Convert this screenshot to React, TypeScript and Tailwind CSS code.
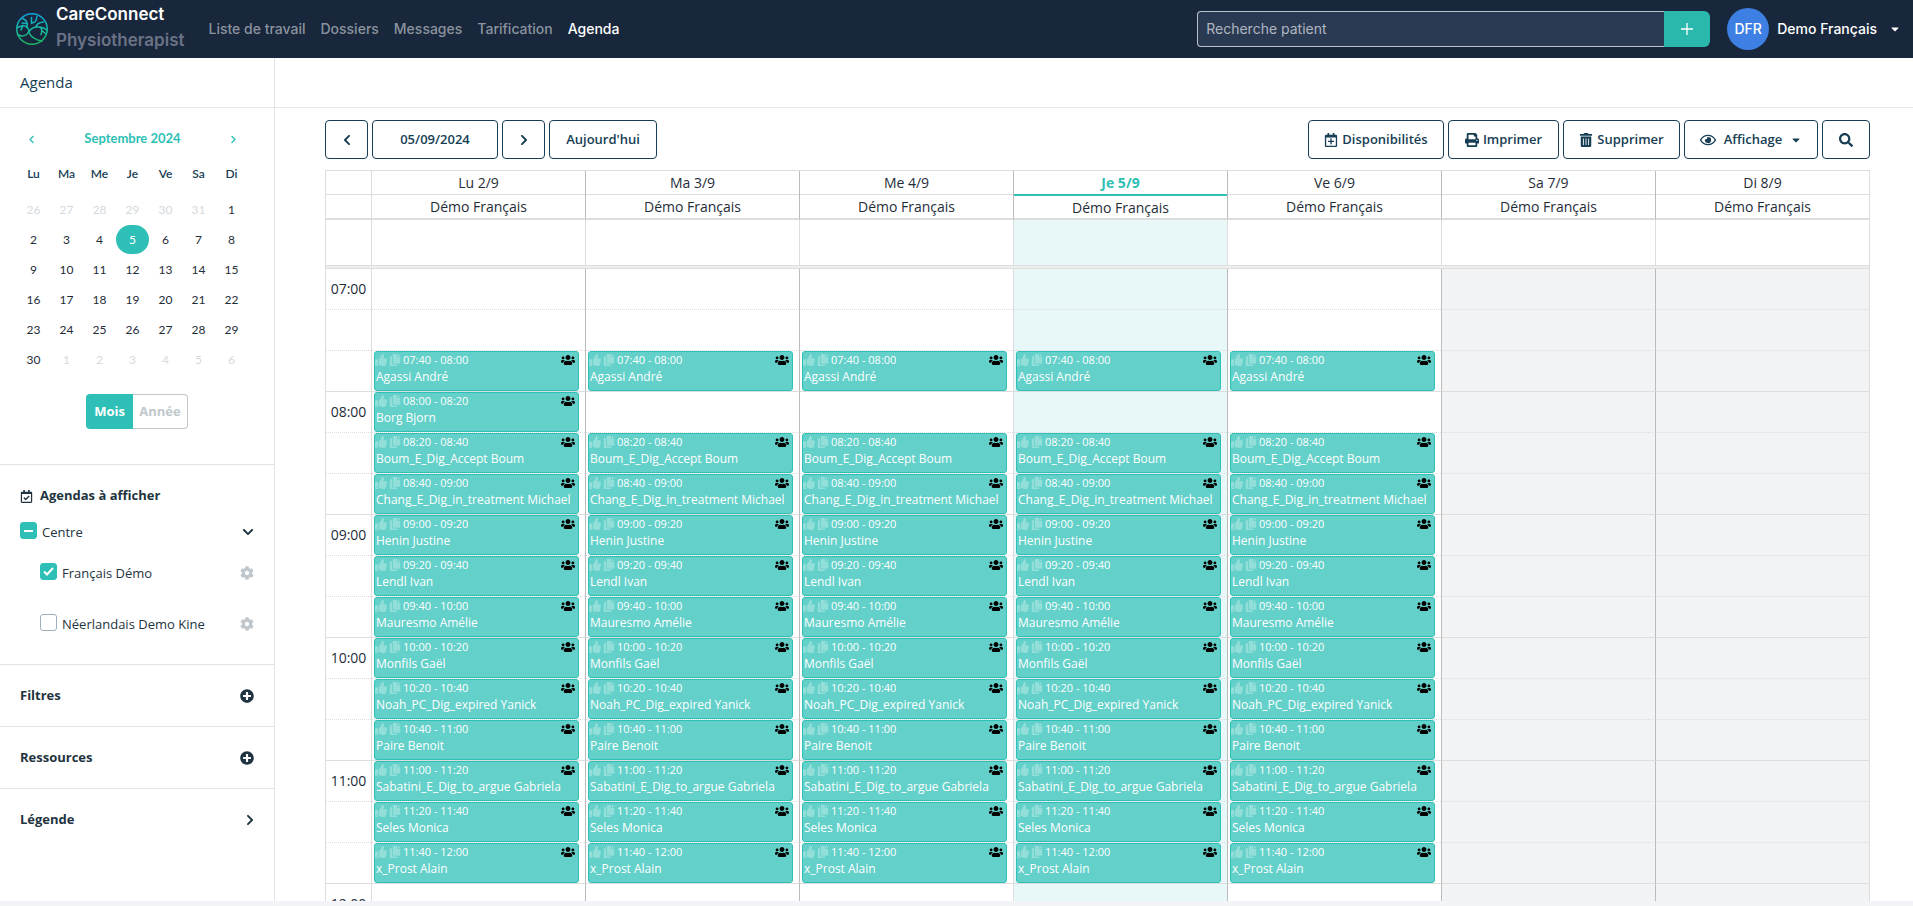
import { useState } from 'react';
import {
  FaCaretDown,
  FaChevronDown,
  FaChevronLeft,
  FaChevronRight,
  FaCog,
  FaCopy,
  FaPlusCircle,
  FaPrint,
  FaRegCalendarCheck,
  FaRegCalendarPlus,
  FaRegEye,
  FaSearch,
  FaThumbsUp,
  FaTrashAlt,
  FaUsers,
} from 'react-icons/fa';

interface Appointment {
  start: string;
  end: string;
  patient: string;
  days: number[];
}

const NAV = ['Liste de travail', 'Dossiers', 'Messages', 'Tarification', 'Agenda'];
const WEEKDAYS = ['Lu', 'Ma', 'Me', 'Je', 'Ve', 'Sa', 'Di'];
const TODAY = 3; // column index of the current day
const WORKDAYS = [0, 1, 2, 3, 4];

const APPOINTMENTS: Appointment[] = [
  { start: '07:40', end: '08:00', patient: 'Agassi André', days: WORKDAYS },
  { start: '08:00', end: '08:20', patient: 'Borg Bjorn', days: [0] },
  { start: '08:20', end: '08:40', patient: 'Boum_E_Dig_Accept Boum', days: WORKDAYS },
  { start: '08:40', end: '09:00', patient: 'Chang_E_Dig_in_treatment Michael', days: WORKDAYS },
  { start: '09:00', end: '09:20', patient: 'Henin Justine', days: WORKDAYS },
  { start: '09:20', end: '09:40', patient: 'Lendl Ivan', days: WORKDAYS },
  { start: '09:40', end: '10:00', patient: 'Mauresmo Amélie', days: WORKDAYS },
  { start: '10:00', end: '10:20', patient: 'Monfils Gaël', days: WORKDAYS },
  { start: '10:20', end: '10:40', patient: 'Noah_PC_Dig_expired Yanick', days: WORKDAYS },
  { start: '10:40', end: '11:00', patient: 'Paire Benoit', days: WORKDAYS },
  { start: '11:00', end: '11:20', patient: 'Sabatini_E_Dig_to_argue Gabriela', days: WORKDAYS },
  { start: '11:20', end: '11:40', patient: 'Seles Monica', days: WORKDAYS },
  { start: '11:40', end: '12:00', patient: 'x_Prost Alain', days: WORKDAYS },
];

// 20 minute slots from 07:00
const SLOTS = Array.from({ length: 18 }, (_, i) => {
  const h = 7 + Math.floor(i / 3);
  const m = (i % 3) * 20;
  return `${String(h).padStart(2, '0')}:${String(m).padStart(2, '0')}`;
});

// September 2024 with the overflow of the neighbouring months
const MONTH_DAYS = Array.from({ length: 42 }, (_, i) => {
  if (i < 6) return { day: 26 + i, other: true };
  if (i < 36) return { day: i - 5, other: false };
  return { day: i - 35, other: true };
});

const toolBtn =
  'flex h-[39px] items-center justify-center rounded-sm border border-[#173e54] bg-white text-[13px] font-semibold text-[#173e54] hover:bg-gray-50';

function Logo() {
  return (
    <svg className="size-8 shrink-0" viewBox="0 0 32 32" fill="none" stroke="url(#brand)" strokeWidth="1.5" strokeLinecap="round" strokeLinejoin="round">
      <defs>
        <linearGradient id="brand" x1="0" y1="0" x2="0" y2="32" gradientUnits="userSpaceOnUse">
          <stop offset="0" stopColor="#12a5e0" />
          <stop offset="0.5" stopColor="#16b8a5" />
          <stop offset="1" stopColor="#1fb35a" />
        </linearGradient>
      </defs>
      <circle cx="16" cy="16" r="15.2" />
      <path d="M1.5 21.5c5 3 9.500 1 11.500-3 2.500-4 6-5 10-4.500 4 .5 6.500 1.500 8 3.500" />
      <path d="M12.800 19c1.500 4 4 7.500 13.200 9" />
      <path d="M13 18.500c-.5-3.500-2-5.500-6-6l-5.500 2M7 12.500 5 17" />
      <path d="M11 14c1-3.500.5-6.500-4.500-8.500M10.500 10.500 6 10" />
      <path d="M15.500 10.500V4.500M15.500 10c3.500 0 5-2.500 5.500-6.500" />
      <path d="M20 14c.5-3 3-4.500 7.500-5" />
      <path d="M24.500 14.500c2 2 1.500 4.500.5 7M26.500 18l3 2.500" />
    </svg>
  );
}

function TopBar() {
  return (
    <header className="flex h-[58px] shrink-0 items-center bg-[#18273c] pl-4 pr-3 font-['Inter',sans-serif]">
      <a href="#" className="flex items-center gap-2">
        <Logo />
        <span className="flex flex-col pb-1 text-[17px] font-semibold leading-[26px]">
          <span className="text-white">CareConnect</span>
          <span className="text-[#6b7285]">Physiotherapist</span>
        </span>
      </a>
      <nav className="ml-6 flex gap-[15px] text-sm font-medium">
        {NAV.map((item) => (
          <a key={item} href="#" className={item === 'Agenda' ? 'text-white' : 'text-[#8b939e] hover:text-white'}>
            {item}
          </a>
        ))}
      </nav>
      <form className="ml-auto flex h-9" onSubmit={(e) => e.preventDefault()}>
        <input
          type="text"
          aria-label="Recherche patient"
          placeholder="Recherche patient"
          className="w-[467px] rounded-l-sm border border-r-0 border-[#b9c1cd] bg-[#2a3a52] px-2 text-sm text-white placeholder:text-[#b0b6c1] focus:outline-none"
        />
        <button type="submit" aria-label="Ajouter" className="flex w-[46px] items-center justify-center rounded-r-md bg-[#2ab8ac] text-white">
          <svg className="size-3" viewBox="0 0 12 12" stroke="currentColor" strokeWidth="1.3">
            <path d="M6 0v12M0 6h12" />
          </svg>
        </button>
      </form>
      <button type="button" className="ml-[17px] flex items-center gap-2 text-sm font-medium text-white">
        <span className="flex size-[42px] items-center justify-center rounded-full bg-[#3d7fe3]">DFR</span>
        Demo Français
        <FaCaretDown className="ml-1 size-3" />
      </button>
    </header>
  );
}

function MonthCalendar() {
  const [view, setView] = useState<'month' | 'year'>('month');
  const [selected, setSelected] = useState(5);

  return (
    <section className="h-[357px] border-b border-[#e0e6e8] pl-[17px] pr-[26px] pt-[21px]">
      <div className="flex h-5 items-center justify-between px-[10px] text-[#2ec0b6]">
        <button type="button" aria-label="Mois précédent">
          <FaChevronLeft className="size-[9px]" />
        </button>
        <span className="font-['Lato',sans-serif] text-[13px] font-bold">Septembre 2024</span>
        <button type="button" aria-label="Mois suivant">
          <FaChevronRight className="size-[9px]" />
        </button>
      </div>
      <div className="mt-[15px] grid grid-cols-7 text-center font-['Lato',sans-serif] text-xs">
        {WEEKDAYS.map((d) => (
          <span key={d} className="mb-[11px] h-5 font-semibold leading-5 text-[#173e54]">{d}</span>
        ))}
        {MONTH_DAYS.map(({ day, other }, i) => {
          const active = !other && day === selected;
          return (
            <button
              key={i}
              type="button"
              onClick={() => !other && setSelected(day)}
              className={`mb-px h-[29px] rounded-full leading-[29px] ${
                active ? 'bg-[#2ec0b6] text-white' : other ? 'text-[#d5dadd]' : 'text-[#1f2d38]'
              }`}
            >
              {day}
            </button>
          );
        })}
      </div>
      <div className="ml-[69px] mt-[19px] flex h-[35px] w-[102px] text-[13px] font-bold">
        <button
          type="button"
          onClick={() => setView('month')}
          className={`w-[47px] rounded-l-sm ${view === 'month' ? 'bg-[#2ec0b6] text-white' : 'border border-[#c1c8cd] text-[#c1c8cd]'}`}
        >
          Mois
        </button>
        <button
          type="button"
          onClick={() => setView('year')}
          className={`flex-1 rounded-r-sm ${view === 'year' ? 'bg-[#2ec0b6] text-white' : 'border border-l-0 border-[#c1c8cd] text-[#c1c8cd]'}`}
        >
          Année
        </button>
      </div>
    </section>
  );
}

interface TickProps {
  label: string;
  checked: boolean;
  partial?: boolean;
  onChange: (v: boolean) => void;
}

function Tick({ label, checked, partial, onChange }: TickProps) {
  return (
    <label className="flex items-start gap-[5px]">
      <span className="relative flex size-[17px]">
        <input
          type="checkbox"
          checked={checked}
          onChange={(e) => onChange(e.target.checked)}
          className="size-[17px] appearance-none rounded-[3px] border border-[#9fb0ba] bg-white checked:border-[#2ec0b6] checked:bg-[#2ec0b6]"
        />
        {checked && (
          <svg className="pointer-events-none absolute inset-0 size-[17px] text-white" viewBox="0 0 17 17" fill="none" stroke="currentColor" strokeWidth="2">
            <path d={partial ? 'M4 9h9' : 'M4 8.500l3 3 6-6.500'} />
          </svg>
        )}
      </span>
      <span className="text-[13px] leading-5">{label}</span>
    </label>
  );
}

function AgendaFilter() {
  const [french, setFrench] = useState(true);
  const [dutch, setDutch] = useState(false);

  const setAll = (v: boolean) => {
    setFrench(v);
    setDutch(v);
  };

  return (
    <section className="h-[200px] border-b border-[#e0e6e8] px-5 pt-[21px] text-[#1f3440]">
      <h2 className="flex h-5 items-center gap-[7px] text-[13px] font-bold">
        <FaRegCalendarCheck className="size-[13px]" />
        Agendas à afficher
      </h2>
      <div className="mt-4 flex h-5 items-center justify-between">
        <Tick label="Centre" checked={french || dutch} partial={french !== dutch} onChange={setAll} />
        <button type="button" aria-label="Réduire">
          <FaChevronDown className="size-3" />
        </button>
      </div>
      <div className="mt-[21px] flex h-5 items-center justify-between pl-5">
        <Tick label="Français Démo" checked={french} onChange={setFrench} />
        <button type="button" aria-label="Paramètres Français Démo" className="text-[#bfc7cc]">
          <FaCog className="size-[14px]" />
        </button>
      </div>
      <div className="mt-[31px] flex h-5 items-center justify-between pl-5">
        <Tick label="Néerlandais Demo Kine" checked={dutch} onChange={setDutch} />
        <button type="button" aria-label="Paramètres Néerlandais Demo Kine" className="text-[#bfc7cc]">
          <FaCog className="size-[14px]" />
        </button>
      </div>
    </section>
  );
}

function Sidebar() {
  return (
    <aside className="flex w-[275px] shrink-0 flex-col border-r border-[#e0e6e8] text-[#1f3440]">
      <h1 className="flex h-[50px] shrink-0 items-center border-b border-[#e5e7e9] px-5 text-[15px] text-[#173e54]">Agenda</h1>
      <MonthCalendar />
      <AgendaFilter />
      {['Filtres', 'Ressources'].map((title) => (
        <button key={title} type="button" className="flex h-[62px] items-center justify-between border-b border-[#e0e6e8] px-5 text-[13px] font-bold">
          {title}
          <FaPlusCircle className="size-[14px]" />
        </button>
      ))}
      <button type="button" className="flex h-[62px] items-center justify-between px-5 text-[13px] font-bold">
        Légende
        <FaChevronRight className="h-3 w-2" />
      </button>
    </aside>
  );
}

function Toolbar() {
  return (
    <div className="flex items-center gap-1">
      <button type="button" aria-label="Semaine précédente" className={`${toolBtn} w-[43px]`}>
        <FaChevronLeft className="size-3" />
      </button>
      <button type="button" className={`${toolBtn} w-[126px]`}>05/09/2024</button>
      <button type="button" aria-label="Semaine suivante" className={`${toolBtn} w-[43px]`}>
        <FaChevronRight className="size-3" />
      </button>
      <button type="button" className={`${toolBtn} w-[108px]`}>Aujourd'hui</button>
      <button type="button" className={`${toolBtn} ml-auto w-[136px] gap-1`}>
        <FaRegCalendarPlus className="size-[14px]" />
        Disponibilités
      </button>
      <button type="button" className={`${toolBtn} w-[111px] gap-1`}>
        <FaPrint className="size-[14px]" />
        Imprimer
      </button>
      <button type="button" className={`${toolBtn} w-[117px] gap-1`}>
        <FaTrashAlt className="size-[14px]" />
        Supprimer
      </button>
      <button type="button" className={`${toolBtn} w-[134px] gap-2`}>
        <FaRegEye className="size-4" />
        Affichage
        <FaCaretDown className="size-3" />
      </button>
      <button type="button" aria-label="Rechercher" className={`${toolBtn} w-12`}>
        <FaSearch className="size-[14px]" />
      </button>
    </div>
  );
}

function EventCard({ item }: { item: Appointment }) {
  return (
    <div className="ml-[2px] mr-[6px] h-10 overflow-hidden rounded-[3px] border border-[#2ec0b6] bg-[#63d0c9] text-white">
      <div className="flex h-4 items-center text-[11px]">
        <FaThumbsUp className="size-3 shrink-0 opacity-30" />
        <FaCopy className="mx-[2px] size-3 shrink-0 opacity-30" />
        <span className="whitespace-nowrap">{item.start} - {item.end}</span>
        <FaUsers className="ml-auto mr-[3px] size-[14px] shrink-0 text-black" />
      </div>
      <div className="truncate pl-px text-xs leading-[18px]">{item.patient}</div>
    </div>
  );
}

function WeekGrid() {
  return (
    <div className="mt-[11px] border border-b-0 border-[#dddddd] text-[#1f2d38]">
      <table className="w-full table-fixed border-separate border-spacing-0">
        <colgroup>
          <col className="w-[45px]" />
          {WEEKDAYS.map((d) => <col key={d} />)}
        </colgroup>
        <thead>
          <tr>
            <td className="border-b-2 border-[#dddddd] p-0 align-top">
              <div className="h-6 border-b border-[#dddddd]" />
            </td>
            {WEEKDAYS.map((d, i) => (
              <th
                key={d}
                className={`h-[49px] border-b-2 border-l border-b-[#dddddd] p-0 align-top text-sm font-normal leading-6 ${
                  i === 0 ? 'border-l-[#dddddd]' : 'border-l-[#bbbbbb]'
                }`}
              >
                <div className={i === TODAY ? 'h-[25px] border-b-2 border-[#2ec0b6] font-bold text-[#2ec0b6]' : 'h-6 border-b border-[#dddddd]'}>
                  {d} {i + 2}/9
                </div>
                <div className="h-[22px]">Démo Français</div>
              </th>
            ))}
          </tr>
        </thead>
        <tbody>
          {/* All-day row */}
          <tr className="h-[45px]">
            <td className="p-0" />
            {WEEKDAYS.map((d, i) => (
              <td key={d} className={`border-l border-[#dddddd] p-0 ${i === TODAY ? 'bg-[#e8f7f7]' : ''}`} />
            ))}
          </tr>
          <tr>
            <td colSpan={8} className="h-1 border-y border-[#dddddd] bg-[#eeeeee] p-0" />
          </tr>

          {SLOTS.map((slot, s) => {
            const item = APPOINTMENTS.find((a) => a.start === slot);
            const line = s % 3 === 2 ? 'border-b border-b-[#dddddd]' : 'border-b border-b-[#dddddd] [border-bottom-style:dotted]';
            return (
              <tr key={slot} className="h-[41px]">
                <td className={`p-0 text-center text-sm ${line}`}>{s % 3 === 0 && slot}</td>
                {WEEKDAYS.map((d, i) => (
                  <td
                    key={d}
                    className={`h-[41px] border-l p-0 ${line} ${i === 0 || i === TODAY ? 'border-l-[#dddddd]' : 'border-l-[#bbbbbb]'} ${
                      i === TODAY ? 'bg-[#e8f7f7]' : i > 4 ? 'bg-[#f2f3f5]' : ''
                    }`}
                  >
                    {item?.days.includes(i) && <EventCard item={item} />}
                  </td>
                ))}
              </tr>
            );
          })}
        </tbody>
      </table>
    </div>
  );
}

export default function App() {
  return (
    <div className="flex h-screen flex-col overflow-hidden bg-[#f3f4f8] pb-[5px] font-['Open_Sans',sans-serif]">
      <TopBar />
      <div className="flex min-h-0 flex-1 bg-white">
        <Sidebar />
        <main className="flex min-w-0 flex-1 flex-col overflow-hidden">
          <div className="h-[50px] shrink-0 border-b border-[#e5e7e9]" />
          <div className="pl-[50px] pr-[43px] pt-3">
            <Toolbar />
            <WeekGrid />
          </div>
        </main>
      </div>
    </div>
  );
}
